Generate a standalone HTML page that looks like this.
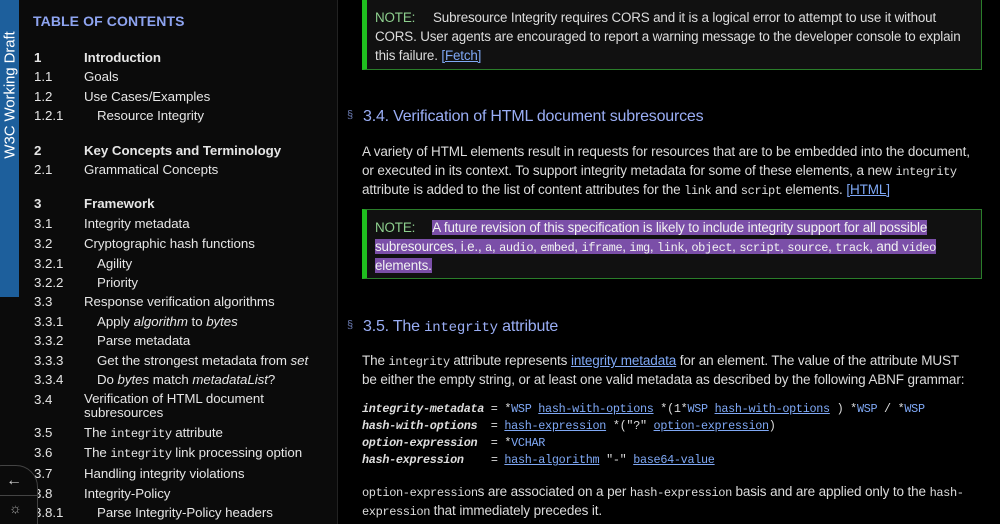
<!DOCTYPE html>
<html style="overflow:hidden;width:1000px;height:524px"><head><meta charset="utf-8"><style>
*{margin:0;padding:0;box-sizing:border-box}
body{width:1000px;height:524px;overflow:hidden;background:#000;font-family:"Liberation Sans",sans-serif;color:#ddd;position:relative}
#side{position:absolute;left:0;top:0;width:338px;height:524px;background:#0b0b0b;border-right:1px solid #222;overflow:hidden}
#tab{position:absolute;left:0;top:0;width:19px;height:297px;background:#1d5f9c}
#tab span{position:absolute;left:10px;top:95px;transform:translate(-50%,-50%) rotate(-90deg);white-space:nowrap;color:#fff;font-size:15px;letter-spacing:-0.1px}
.t{position:absolute;font-size:13.3px;color:#e6e6e6;white-space:nowrap;letter-spacing:-0.05px}
.n{left:34px}.a{left:84px}.b{left:97px}
.bold{font-weight:bold}
code,.m{font-family:"Liberation Mono",monospace;font-size:12px;letter-spacing:-0.4px}
#toch{position:absolute;left:33px;top:13px;color:#8ea4f0;font-weight:bold;font-size:14px;letter-spacing:0.1px}
.p{position:absolute;left:362px;font-size:13.5px;line-height:19px;color:#dcdcdc;white-space:nowrap;letter-spacing:-0.12px}
a{color:#7fa8f5;text-decoration:underline}
.note{position:absolute;left:362px;width:620px;background:#111;border:1px solid #2a7d2a;border-left:5px solid #1fbf1f}
.note .l{position:absolute;left:8px;font-size:13.4px;line-height:19px;white-space:nowrap;color:#ddd;letter-spacing:-0.15px}
.nl{color:#8ed08e}
.h{position:absolute;left:363px;font-size:16px;color:#9aaef5;letter-spacing:-0.2px}
.sec{position:absolute;left:347px;font-size:11px;color:#6a7ab0}
.hl{background:#7b4fa8;color:#f2f2f2}
.g{position:absolute;left:362px;font-family:"Liberation Mono",monospace;font-size:11.8px;color:#ddd;white-space:nowrap;letter-spacing:-0.3px}
.g b{font-style:italic}
.g a{color:#7fa8f5}
#btn{position:absolute;left:-20px;top:465px;width:58px;height:80px;border:1px solid #444;border-radius:22px;background:#0b0b0b}
</style></head><body>
<div id="side">
<div id="tab"><span>W3C Working Draft</span></div>
<div id="toch">TABLE OF CONTENTS</div>
<div class="t n bold" style="top:50px">1</div><div class="t a bold" style="top:50px">Introduction</div>
<div class="t n" style="top:69px">1.1</div><div class="t a" style="top:69px">Goals</div>
<div class="t n" style="top:89px">1.2</div><div class="t a" style="top:89px">Use Cases/Examples</div>
<div class="t n" style="top:108px">1.2.1</div><div class="t b" style="top:108px">Resource Integrity</div>
<div class="t n bold" style="top:143px">2</div><div class="t a bold" style="top:143px">Key Concepts and Terminology</div>
<div class="t n" style="top:162px">2.1</div><div class="t a" style="top:162px">Grammatical Concepts</div>
<div class="t n bold" style="top:196px">3</div><div class="t a bold" style="top:196px">Framework</div>
<div class="t n" style="top:216px">3.1</div><div class="t a" style="top:216px">Integrity metadata</div>
<div class="t n" style="top:236px">3.2</div><div class="t a" style="top:236px">Cryptographic hash functions</div>
<div class="t n" style="top:256px">3.2.1</div><div class="t b" style="top:256px">Agility</div>
<div class="t n" style="top:275px">3.2.2</div><div class="t b" style="top:275px">Priority</div>
<div class="t n" style="top:294px">3.3</div><div class="t a" style="top:294px">Response verification algorithms</div>
<div class="t n" style="top:314px">3.3.1</div><div class="t b" style="top:314px">Apply <i>algorithm</i> to <i>bytes</i></div>
<div class="t n" style="top:333px">3.3.2</div><div class="t b" style="top:333px">Parse metadata</div>
<div class="t n" style="top:353px">3.3.3</div><div class="t b" style="top:353px">Get the strongest metadata from <i>set</i></div>
<div class="t n" style="top:372px">3.3.4</div><div class="t b" style="top:372px">Do <i>bytes</i> match <i>metadataList</i>?</div>
<div class="t n" style="top:392px">3.4</div><div class="t a" style="top:392px;line-height:14px">Verification of HTML document<br>subresources</div>
<div class="t n" style="top:425px">3.5</div><div class="t a" style="top:425px">The <span class="m">integrity</span> attribute</div>
<div class="t n" style="top:445px">3.6</div><div class="t a" style="top:445px">The <span class="m">integrity</span> link processing option</div>
<div class="t n" style="top:466px">3.7</div><div class="t a" style="top:466px">Handling integrity violations</div>
<div class="t n" style="top:486px">3.8</div><div class="t a" style="top:486px">Integrity-Policy</div>
<div class="t n" style="top:505px">3.8.1</div><div class="t b" style="top:505px">Parse Integrity-Policy headers</div>
<div id="btn"></div>
<div style="position:absolute;left:6px;top:472px;color:#ccc;font-size:16px">←</div>
<div style="position:absolute;left:0;top:495px;width:38px;border-top:1px solid #444"></div>
<div style="position:absolute;left:9px;top:500px;color:#aaa;font-size:14px">☼</div>
</div>

<div class="note" style="top:-2px;height:72px">
<div class="l" style="top:9px"><span class="nl">NOTE:</span>&nbsp;&nbsp;&nbsp;&nbsp; Subresource Integrity requires CORS and it is a logical error to attempt to use it without</div>
<div class="l" style="top:28px">CORS. User agents are encouraged to report a warning message to the developer console to explain</div>
<div class="l" style="top:47px">this failure. <a>[Fetch]</a></div>
</div>

<div class="sec" style="top:109px">§</div>
<div class="h" style="top:108px">3.4. Verification of HTML document subresources</div>
<div class="p" style="top:142px">A variety of HTML elements result in requests for resources that are to be embedded into the document,</div>
<div class="p" style="top:161px">or executed in its context. To support integrity metadata for some of these elements, a new <code>integrity</code></div>
<div class="p" style="top:180px">attribute is added to the list of content attributes for the <code>link</code> and <code>script</code> elements. <a>[HTML]</a></div>

<div class="note" style="top:209px;height:70px">
<div class="l" style="top:8px"><span class="nl">NOTE:</span>&nbsp;&nbsp;&nbsp;&nbsp; <span class="hl">A future revision of this specification is likely to include integrity support for all possible</span></div>
<div class="l" style="top:27px"><span class="hl">subresources, i.e., <code>a</code>, <code>audio</code>, <code>embed</code>, <code>iframe</code>, <code>img</code>, <code>link</code>, <code>object</code>, <code>script</code>, <code>source</code>, <code>track</code>, and <code>video</code></span></div>
<div class="l" style="top:46px"><span class="hl">elements.</span></div>
</div>

<div class="sec" style="top:319px">§</div>
<div class="h" style="top:318px">3.5. The <span style="font-family:'Liberation Mono',monospace;font-size:14px">integrity</span> attribute</div>
<div class="p" style="top:351px">The <code>integrity</code> attribute represents <a>integrity metadata</a> for an element. The value of the attribute MUST</div>
<div class="p" style="top:370px">be either the empty string, or at least one valid metadata as described by the following ABNF grammar:</div>

<div class="g" style="top:402px"><b>integrity-metadata</b> = *<a style="text-decoration:none">WSP</a> <a>hash-with-options</a> *(1*<a style="text-decoration:none">WSP</a> <a>hash-with-options</a> ) *<a style="text-decoration:none">WSP</a> / *<a style="text-decoration:none">WSP</a></div>
<div class="g" style="top:419px"><b>hash-with-options</b>&nbsp; = <a>hash-expression</a> *("?" <a>option-expression</a>)</div>
<div class="g" style="top:436px"><b>option-expression</b>&nbsp; = *<a style="text-decoration:none">VCHAR</a></div>
<div class="g" style="top:453px"><b>hash-expression</b>&nbsp;&nbsp;&nbsp; = <a>hash-algorithm</a> "-" <a>base64-value</a></div>

<div class="p" style="top:482px"><code>option-expression</code>s are associated on a per <code>hash-expression</code> basis and are applied only to the <code>hash-</code></div>
<div class="p" style="top:501px"><code>expression</code> that immediately precedes it.</div>
</body></html>
